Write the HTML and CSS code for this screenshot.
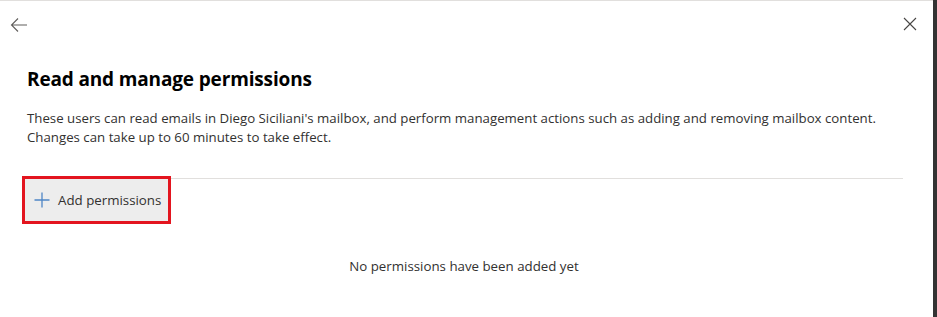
FILE: index.html
```html
<!DOCTYPE html>
<html>
<head>
<meta charset="utf-8">
<link rel="stylesheet" href="styles.css">
</head>
<body>
<div class="frame">
  <div class="panel">
    <div class="topbar">
      <button class="icon-btn back" aria-label="Back">
        <svg width="18" height="18" viewBox="0 0 18 18"><path d="M17 9H2M8 2.5L1.5 9L8 15.5" fill="none" stroke="#605e5c" stroke-width="1.1"/></svg>
      </button>
      <button class="icon-btn close" aria-label="Close">
        <svg width="14" height="14" viewBox="0 0 14 14"><path d="M1 1L13 13M13 1L1 13" fill="none" stroke="#484644" stroke-width="1.1"/></svg>
      </button>
    </div>
    <div class="content">
      <h1 class="title">Read and manage permissions</h1>
      <p class="desc">These users can read emails in Diego Siciliani's mailbox, and perform management actions such as adding and removing mailbox content.<br>Changes can take up to 60 minutes to take effect.</p>
      <div class="separator"></div>
      <div class="toolbar">
        <button class="add-btn">
          <svg width="16" height="16" viewBox="0 0 16 16"><path d="M8 0.5V15.5M0.5 8H15.5" fill="none" stroke="#4f86c6" stroke-width="1.3"/></svg>
          <span>Add permissions</span>
        </button>
      </div>
      <div class="empty">No permissions have been added yet</div>
    </div>
  </div>
  <div class="edge"></div>
</div>
</body>
</html>
```
FILE: styles.css
```css
* { box-sizing: border-box; }
html, body { margin: 0; padding: 0; background: #fff; }
body {
  font-family: "Open Sans", "Noto Sans", "Liberation Sans", sans-serif;
  color: #323130;
  width: 937px;
  height: 317px;
  overflow: hidden;
}
.frame {
  display: flex;
  height: 317px;
}
.panel {
  flex: 1;
  border-top: 1px solid #e1dfdd;
  display: flex;
  flex-direction: column;
}
.edge {
  width: 4px;
  background: #333333;
}
.topbar {
  display: flex;
  justify-content: space-between;
  align-items: center;
  height: 48px;
  padding: 0 13px 0 9px;
}
.icon-btn {
  background: none;
  border: 0;
  padding: 0;
  display: flex;
  align-items: center;
  justify-content: center;
  width: 20px;
  height: 20px;
}
.back { margin-top: -1px; }
.close { margin-top: -2px; }
.content {
  padding: 0 30px 0 27px;
}
.title {
  margin: 16px 0 0;
  font-size: 19px;
  font-weight: 700;
  color: #000;
  line-height: 28px;
  letter-spacing: -0.15px;
}
.desc {
  margin: 16px 0 0;
  font-size: 13.25px;
  line-height: 19px;
  color: #323130;
}
.separator {
  height: 1px;
  background: #e1dfdd;
  margin-top: 31px;
}
.toolbar {
  display: flex;
  margin-top: -3px;
  margin-left: -5px;
}
.add-btn {
  display: flex;
  align-items: center;
  gap: 8px;
  height: 48px;
  width: 149px;
  flex: none;
  padding: 0 0 0 9px;
  background: #ededed;
  border: 3px solid #e3151f;
  font-family: inherit;
  font-size: 13.3px;
  color: #323130;
  white-space: nowrap;
}
.add-btn span { margin-top: -1px; }
.empty {
  text-align: center;
  font-size: 13.3px;
  color: #323130;
  margin-top: 33px;
  padding-right: 2px;
}
```
